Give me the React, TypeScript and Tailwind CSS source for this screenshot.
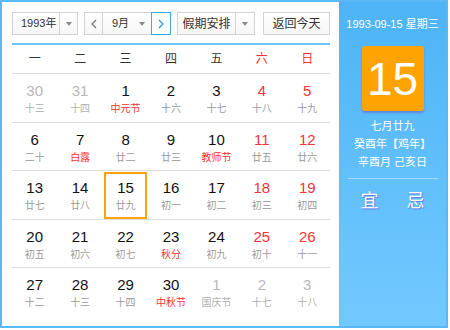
import React from "react";

type C = "n" | "r" | "g";
type Day = { d: number; l: string; dc: C; lc: C };

const rows: Day[][] = [
  [
    { d: 30, l: "十三", dc: "g", lc: "g" },
    { d: 31, l: "十四", dc: "g", lc: "g" },
    { d: 1, l: "中元节", dc: "n", lc: "r" },
    { d: 2, l: "十六", dc: "n", lc: "n" },
    { d: 3, l: "十七", dc: "n", lc: "n" },
    { d: 4, l: "十八", dc: "r", lc: "n" },
    { d: 5, l: "十九", dc: "r", lc: "n" },
  ],
  [
    { d: 6, l: "二十", dc: "n", lc: "n" },
    { d: 7, l: "白露", dc: "n", lc: "r" },
    { d: 8, l: "廿二", dc: "n", lc: "n" },
    { d: 9, l: "廿三", dc: "n", lc: "n" },
    { d: 10, l: "教师节", dc: "n", lc: "r" },
    { d: 11, l: "廿五", dc: "r", lc: "n" },
    { d: 12, l: "廿六", dc: "r", lc: "n" },
  ],
  [
    { d: 13, l: "廿七", dc: "n", lc: "n" },
    { d: 14, l: "廿八", dc: "n", lc: "n" },
    { d: 15, l: "廿九", dc: "n", lc: "n" },
    { d: 16, l: "初一", dc: "n", lc: "n" },
    { d: 17, l: "初二", dc: "n", lc: "n" },
    { d: 18, l: "初三", dc: "r", lc: "n" },
    { d: 19, l: "初四", dc: "r", lc: "n" },
  ],
  [
    { d: 20, l: "初五", dc: "n", lc: "n" },
    { d: 21, l: "初六", dc: "n", lc: "n" },
    { d: 22, l: "初七", dc: "n", lc: "n" },
    { d: 23, l: "秋分", dc: "n", lc: "r" },
    { d: 24, l: "初九", dc: "n", lc: "n" },
    { d: 25, l: "初十", dc: "r", lc: "n" },
    { d: 26, l: "十一", dc: "r", lc: "n" },
  ],
  [
    { d: 27, l: "十二", dc: "n", lc: "n" },
    { d: 28, l: "十三", dc: "n", lc: "n" },
    { d: 29, l: "十四", dc: "n", lc: "n" },
    { d: 30, l: "中秋节", dc: "n", lc: "r" },
    { d: 1, l: "国庆节", dc: "g", lc: "g" },
    { d: 2, l: "十七", dc: "g", lc: "g" },
    { d: 3, l: "十八", dc: "g", lc: "g" },
  ],
];

const numColor: Record<C, string> = {
  n: "text-[#111111]",
  r: "text-[#ff3333]",
  g: "text-[#b8b8b8]",
};
const lunColor: Record<C, string> = {
  n: "text-[#9a9a9a]",
  r: "text-[#ff3333]",
  g: "text-[#b0b0b0]",
};

function Caret() {
  return (
    <div className="w-0 h-0 border-l-[3px] border-r-[3px] border-t-[4px] border-l-transparent border-r-transparent border-t-[#8a8a8a]" />
  );
}

function Chevron({ dir, color }: { dir: "l" | "r"; color: string }) {
  return (
    <svg width="6" height="10" viewBox="0 0 6 10">
      <polyline
        points={dir === "l" ? "5,1 1,5 5,9" : "1,1 5,5 1,9"}
        fill="none"
        stroke={color}
        strokeWidth="1.2"
      />
    </svg>
  );
}

export default function App() {
  const weekdays = ["一", "二", "三", "四", "五", "六", "日"];
  return (
    <div className="font-['Liberation_Sans','Noto_Sans_CJK_SC',sans-serif] bg-white w-[450px] h-[330px]">
      <div className="w-[448px] h-[328px] border-2 border-[#5ab8f4] flex">
        {/* Left panel */}
        <div className="w-[337px] pl-[10px] pt-[10px]">
          <div className="w-[318px]">
            {/* Toolbar */}
            <div className="flex pb-[8px] border-b-2 border-[#6cc4fb] text-[12px] text-[#333] whitespace-nowrap">
              <div className="flex w-[66px] h-[23px] border border-[#d3d3d3] bg-gradient-to-b from-white to-[#f6f6f6]">
                <div className="w-[46px] flex items-center pl-[8px] text-[11px] text-[#333]">1993年</div>
                <div className="flex-1 border-l border-[#d3d3d3] flex items-center justify-center">
                  <Caret />
                </div>
              </div>
              <div className="flex ml-[6px] h-[23px]">
                <div className="w-[19px] border border-[#d3d3d3] flex items-center justify-center bg-gradient-to-b from-white to-[#f6f6f6]">
                  <Chevron dir="l" color="#777" />
                </div>
                <div className="w-[48px] border-y border-[#d3d3d3] flex items-center bg-gradient-to-b from-white to-[#f6f6f6]">
                  <span className="pl-[9px] text-[11px]">9月</span>
                  <div className="ml-auto mr-[6px]">
                    <Caret />
                  </div>
                </div>
                <div className="w-[20px] border border-[#3ea8f5] flex items-center justify-center bg-white">
                  <Chevron dir="r" color="#2196f3" />
                </div>
              </div>
              <div className="flex ml-[6px] w-[78px] h-[23px] border border-[#d3d3d3] bg-gradient-to-b from-white to-[#f6f6f6]">
                <div className="w-[57px] flex items-center justify-center">假期安排</div>
                <div className="flex-1 border-l border-[#d3d3d3] flex items-center justify-center">
                  <Caret />
                </div>
              </div>
              <div className="ml-[8px] w-[67px] h-[23px] border border-[#d3d3d3] flex items-center justify-center bg-gradient-to-b from-white to-[#f6f6f6]">
                返回今天
              </div>
            </div>
            {/* Weekday header */}
            <div className="grid grid-cols-7 h-[29px] border-b border-[#dddddd] text-[12px]">
              {weekdays.map((w, i) => (
                <div
                  key={w}
                  className={`flex items-center justify-center ${i >= 5 ? "text-[#ff3333]" : "text-[#333]"}`}
                >
                  {w}
                </div>
              ))}
            </div>
            {/* Days */}
            {rows.map((row, ri) => (
              <div
                key={ri}
                className={`grid grid-cols-7 h-[48.5px] ${ri < rows.length - 1 ? "border-b border-[#dddddd]" : ""}`}
              >
                {row.map((c, ci) => {
                  const sel = ri === 2 && ci === 2;
                  return (
                    <div key={ci} className="relative flex flex-col items-center pt-[8px]">
                      {sel && (
                        <div className="absolute left-[1px] right-[1px] top-[1px] bottom-[0px] border-2 border-[#ffa20c]" />
                      )}
                      <div className={`text-[15px] leading-[18px] ${numColor[c.dc]}`}>{c.d}</div>
                      <div className={`text-[10px] leading-[14px] mt-[2px] ${lunColor[c.lc]}`}>{c.l}</div>
                    </div>
                  );
                })}
              </div>
            ))}
          </div>
        </div>
        {/* Right panel */}
        <div className="w-[107px] h-full bg-gradient-to-b from-[#4db4f6] to-[#72c9ff] flex flex-col items-center pt-[14px] text-white">
          <div className="text-[11px] leading-[16px] whitespace-nowrap">1993-09-15 星期三</div>
          <div className="mt-[14px] w-[62px] h-[65px] rounded-[3px] bg-[#ffa300] flex items-center justify-center shadow-[0_2px_2px_rgba(90,80,200,0.45)]">
            <span className="text-[46px] leading-none text-white">15</span>
          </div>
          <div className="mt-[6px] text-[11px] leading-[18px] text-center whitespace-nowrap">
            <div>七月廿九</div>
            <div>癸酉年【鸡年】</div>
            <div>辛酉月 己亥日</div>
          </div>
          <div className="mt-[7px] w-[90px] h-px bg-white/40" />
          <div className="mt-[11px] flex gap-[28px] text-[18px] leading-[22px] [text-shadow:1px_1px_1px_#6b74e6]">
            <span>宜</span>
            <span>忌</span>
          </div>
        </div>
      </div>
    </div>
  );
}
